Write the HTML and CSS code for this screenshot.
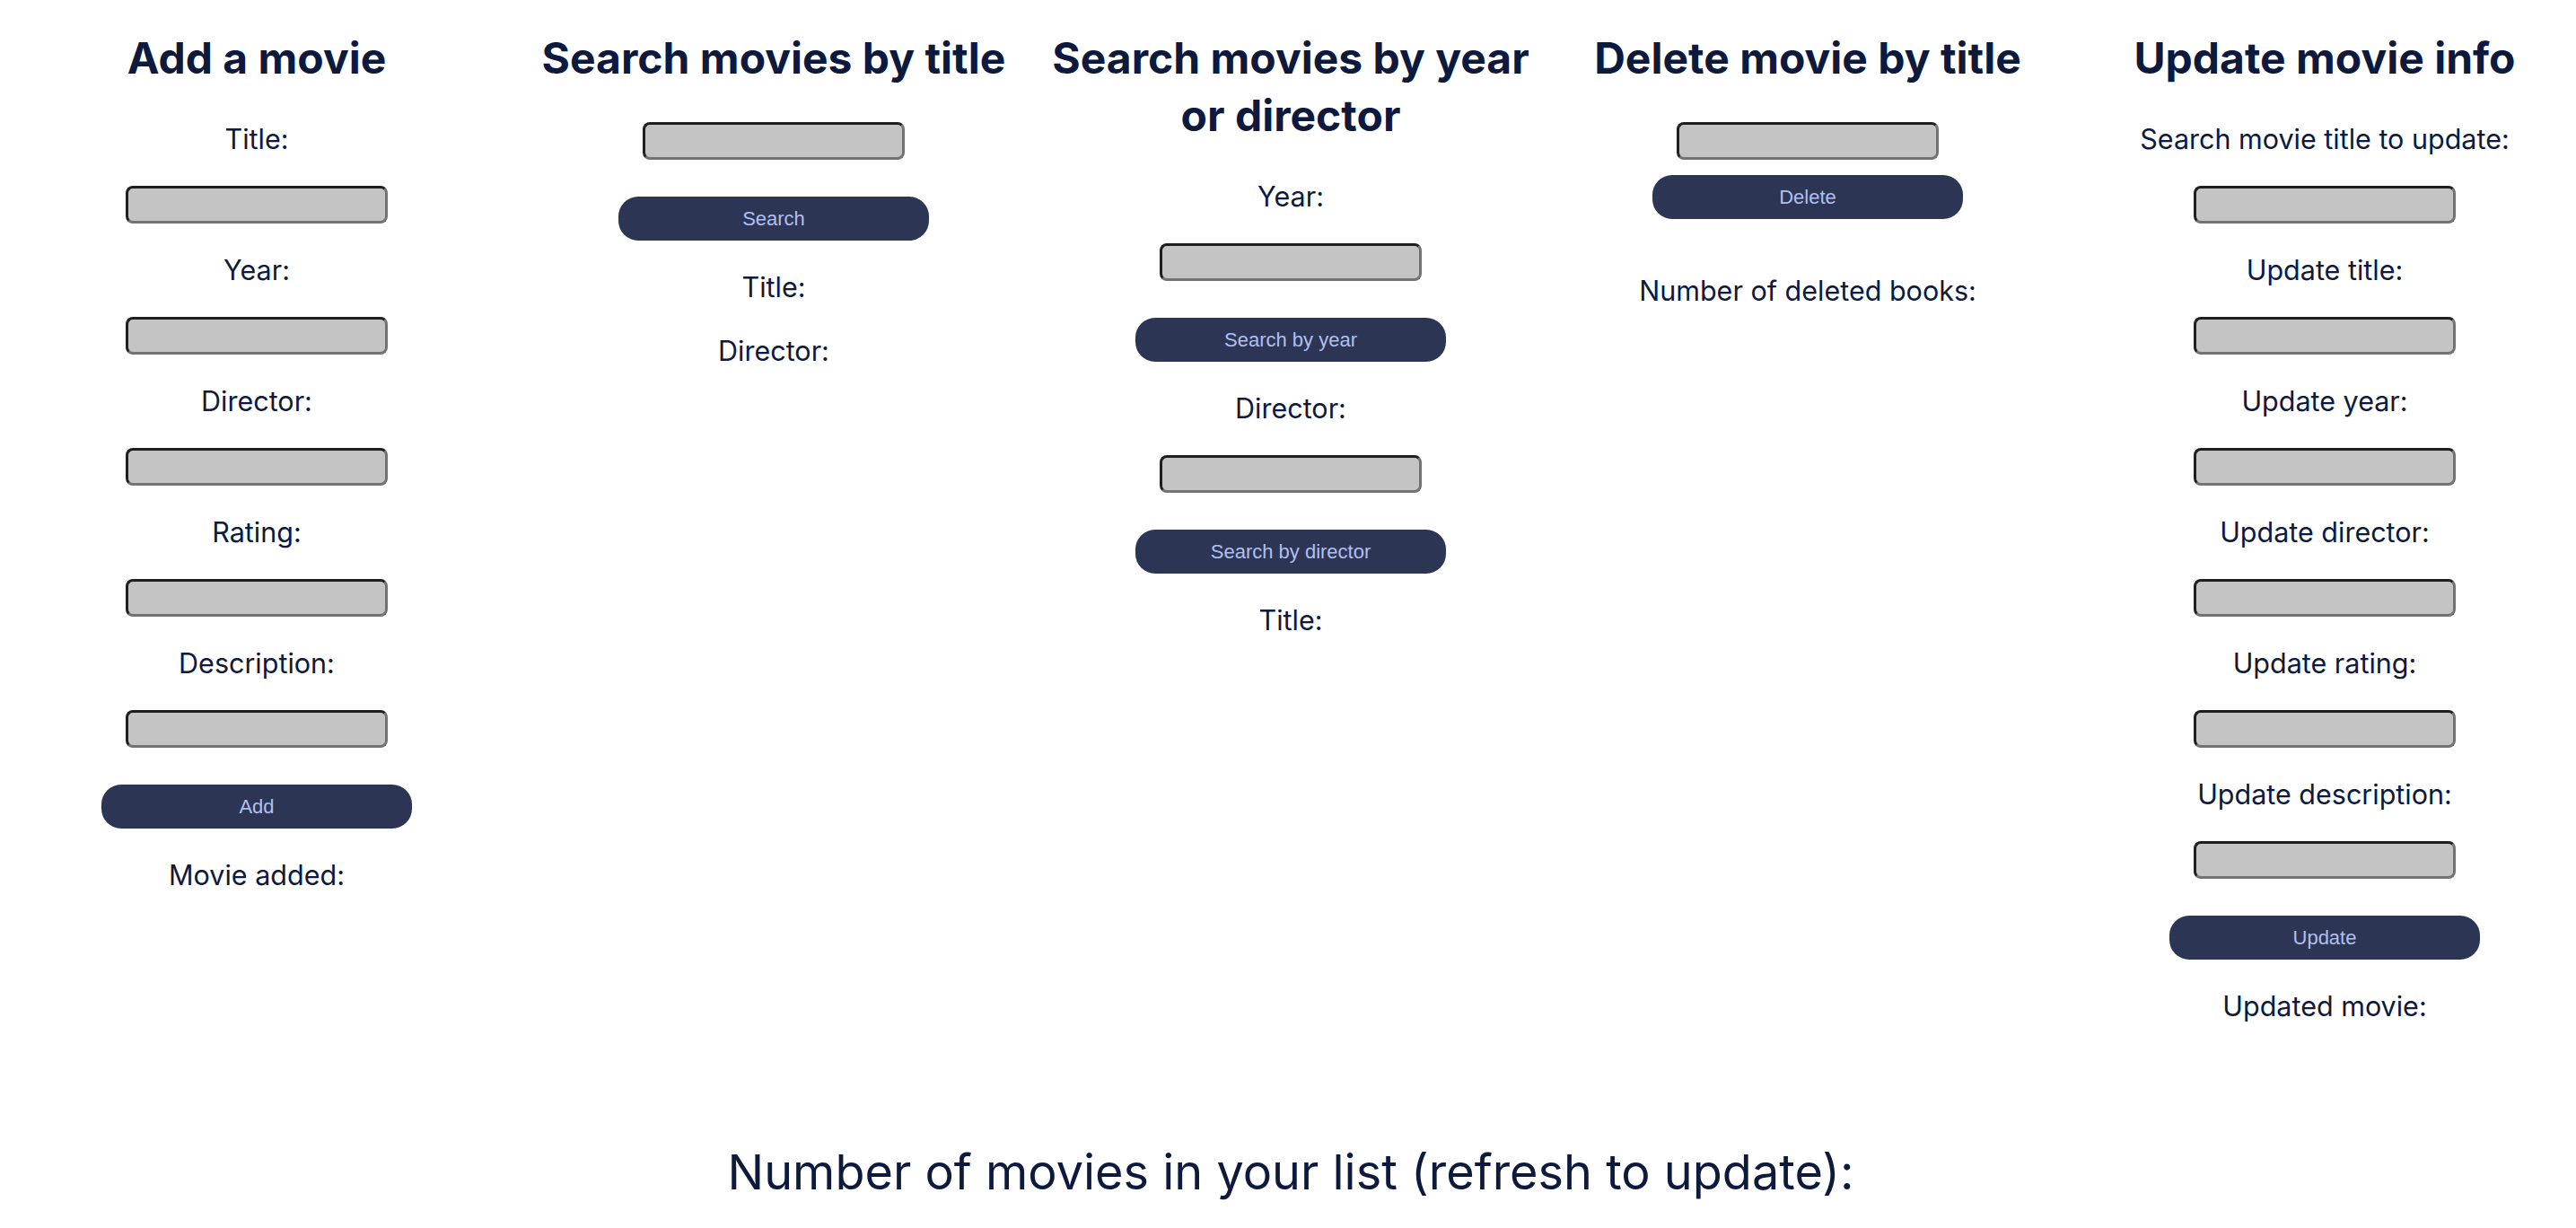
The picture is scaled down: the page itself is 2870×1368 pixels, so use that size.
FILE: index.html
```html
<!DOCTYPE html>
<html lang="en">
<head>
<meta charset="utf-8">
<title>Movies</title>
<link rel="stylesheet" href="styles.css">
</head>
<body>
<div class="page">
  <main class="panels">
    <section class="panel">
      <h2 class="panel-title">Add a movie</h2>
      <label class="field-label">Title:</label>
      <input class="field-input" type="text">
      <label class="field-label">Year:</label>
      <input class="field-input" type="text">
      <label class="field-label">Director:</label>
      <input class="field-input" type="text">
      <label class="field-label">Rating:</label>
      <input class="field-input" type="text">
      <label class="field-label">Description:</label>
      <input class="field-input" type="text">
      <button class="action">Add</button>
      <p class="field-label">Movie added:</p>
    </section>

    <section class="panel">
      <h2 class="panel-title">Search movies by title</h2>
      <input class="field-input" type="text">
      <button class="action">Search</button>
      <p class="field-label">Title:</p>
      <p class="field-label">Director:</p>
    </section>

    <section class="panel">
      <h2 class="panel-title">Search movies by year or director</h2>
      <label class="field-label">Year:</label>
      <input class="field-input" type="text">
      <button class="action">Search by year</button>
      <label class="field-label">Director:</label>
      <input class="field-input" type="text">
      <button class="action">Search by director</button>
      <p class="field-label">Title:</p>
    </section>

    <section class="panel">
      <h2 class="panel-title">Delete movie by title</h2>
      <input class="field-input" type="text">
      <button class="action action-tight">Delete</button>
      <p class="field-label field-label-spaced">Number of deleted books:</p>
    </section>

    <section class="panel">
      <h2 class="panel-title">Update movie info</h2>
      <label class="field-label">Search movie title to update:</label>
      <input class="field-input" type="text">
      <label class="field-label">Update title:</label>
      <input class="field-input" type="text">
      <label class="field-label">Update year:</label>
      <input class="field-input" type="text">
      <label class="field-label">Update director:</label>
      <input class="field-input" type="text">
      <label class="field-label">Update rating:</label>
      <input class="field-input" type="text">
      <label class="field-label">Update description:</label>
      <input class="field-input" type="text">
      <button class="action">Update</button>
      <p class="field-label">Updated movie:</p>
    </section>
  </main>

  <p class="count">Number of movies in your list (refresh to update):</p>
</div>
</body>
</html>
```

FILE: styles.css
```css
html {
  overflow-x: hidden;
}

body {
  margin: 0;
  background: #ffffff;
  color: #0d1a3d;
  font-family: Inter, "Noto Sans", sans-serif;
}

.page {
  padding-left: 6px;
}

.panels {
  display: grid;
  grid-template-columns: repeat(5, 576px);
  justify-content: center;
  align-items: start;
  padding-top: 33px;
}

.panel {
  display: flex;
  flex-direction: column;
  align-items: center;
  gap: 33px;
}

.panel-title {
  margin: 0 0 6px;
  max-width: 550px;
  font-size: 48px;
  line-height: 64px;
  font-weight: 700;
  text-align: center;
}

.field-label {
  margin: 0;
  font-size: 30.5px;
  line-height: 38px;
  font-weight: 400;
  text-align: center;
}

.field-label-spaced {
  margin-top: 28px;
}

.field-input {
  box-sizing: border-box;
  width: 292px;
  height: 42px;
  margin: 0;
  padding: 0 8px;
  border: 3px solid;
  border-color: #1f1f1f #737373 #737373 #1f1f1f;
  border-radius: 8px;
  background: #c4c4c4;
}

.action {
  box-sizing: border-box;
  width: 346px;
  height: 49px;
  margin: 8px 0 0;
  padding: 0;
  border: 0;
  border-radius: 22px;
  background: #2c3654;
  color: #b1bff0;
  font-family: "Liberation Sans", Arial, sans-serif;
  font-size: 22px;
  cursor: pointer;
}

.action-tight {
  margin-top: -16px;
}

.count {
  margin: 133px 0 0;
  font-size: 54px;
  line-height: 66px;
  font-weight: 400;
  text-align: center;
}
```
